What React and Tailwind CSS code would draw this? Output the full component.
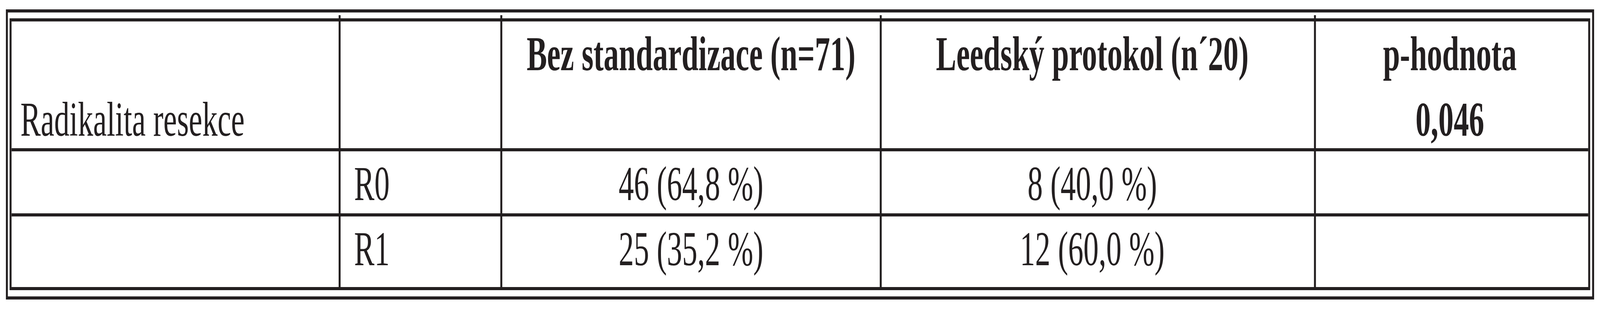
import { useState, useLayoutEffect } from 'react'

const LINE = 'border-[#231f20]'
const PAGE_W = 6511

const COLS = ['w-[1339px]', 'w-[658px]', 'w-[1544px]', 'w-[1767px]', 'w-[1108px]']

// small stub where each inner column line pokes through the top border
function Tick() {
  return <span className="absolute -top-[16px] -right-[8px] h-[16px] w-[8px] bg-[#231f20]" />
}

function Row({ cells, height, last }) {
  return (
    <div className={`flex ${height} ${last ? '' : `border-b-8 ${LINE}`}`}>
      {cells.map((c, i) => (
        <div
          key={i}
          className={`${COLS[i]} shrink-0 h-full ${i < 4 ? `border-r-8 ${LINE}` : ''} ${c.cls || ''}`}
        >
          {c.content}
        </div>
      ))}
    </div>
  )
}

// the capture window can come out narrower than the table, so squeeze it to fit
function useFitScale() {
  const get = () => Math.min(1, document.documentElement.clientWidth / PAGE_W)
  const [scale, setScale] = useState(get)
  useLayoutEffect(() => {
    const onResize = () => setScale(get())
    onResize()
    window.addEventListener('resize', onResize)
    return () => window.removeEventListener('resize', onResize)
  }, [])
  return scale
}

export default function App() {
  const scale = useFitScale()

  return (
    <div className="w-full h-[800px] overflow-hidden bg-white">
      <div
        className="w-[6511px] h-[800px] origin-top-left pt-[24px] pl-[24px] text-[#231f20] text-[124px] leading-[168px]"
        style={{ fontFamily: '"Liberation Serif", "Times New Roman", serif', transform: `scaleX(${scale})` }}
      >
        <div className={`w-[6463px] h-[744px] border-8 ${LINE} pt-[15px] pl-[7px] pr-[8px] pb-[16px]`}>
          <div className={`w-[6432px] h-[697px] border-8 ${LINE}`}>
            {/* header */}
            <div className={`flex h-[333px] border-b-8 ${LINE}`}>
              <div className={`${COLS[0]} shrink-0 relative border-r-8 ${LINE} pl-[36px] pt-[168px] whitespace-nowrap`}>
                Radikalita resekce
                <Tick />
              </div>
              <div className={`${COLS[1]} shrink-0 relative border-r-8 ${LINE}`}>
                <Tick />
              </div>
              <div className={`${COLS[2]} shrink-0 relative border-r-8 ${LINE} text-center font-bold whitespace-nowrap`}>
                Bez standardizace (n=71)
                <Tick />
              </div>
              <div className={`${COLS[3]} shrink-0 relative border-r-8 ${LINE} text-center font-bold whitespace-nowrap pr-[45px]`}>
                Leedský protokol (n´20)
                <Tick />
              </div>
              <div className={`${COLS[4]} shrink-0 text-center font-bold pr-[18px]`}>
                <div>p-hodnota</div>
                <div>0,046</div>
              </div>
            </div>

            <Row
              height="h-[167px]"
              cells={[
                {},
                { content: 'R0', cls: 'pl-[55px]' },
                { content: '46 (64,8 %)', cls: 'text-center whitespace-nowrap' },
                { content: '8 (40,0 %)', cls: 'text-center whitespace-nowrap pr-[45px]' },
                {},
              ]}
            />
            <Row
              height="h-[181px]"
              last
              cells={[
                {},
                { content: 'R1', cls: 'pl-[55px]' },
                { content: '25 (35,2 %)', cls: 'text-center whitespace-nowrap' },
                { content: '12 (60,0 %)', cls: 'text-center whitespace-nowrap pr-[45px]' },
                {},
              ]}
            />
          </div>
        </div>
      </div>
    </div>
  )
}
